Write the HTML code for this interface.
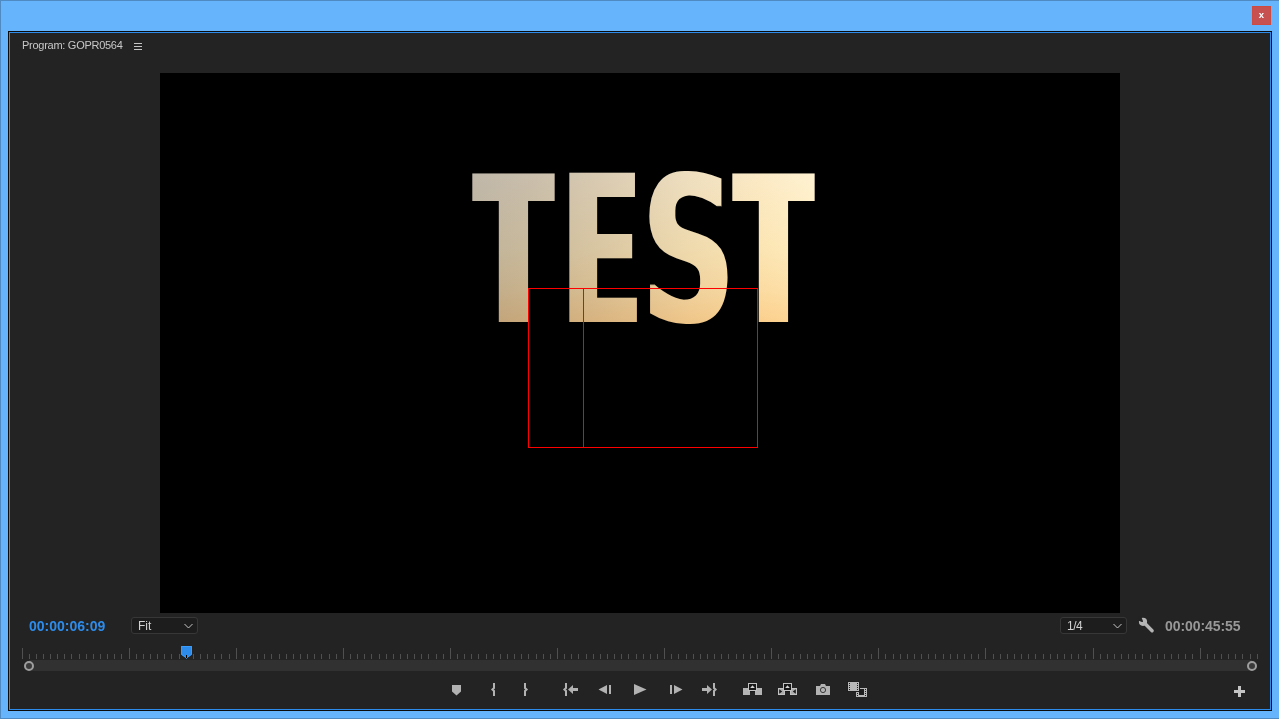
<!DOCTYPE html>
<html lang="en"><head><meta charset="utf-8"><title>Program: GOPR0564</title>
<style>
html,body{margin:0;padding:0}
body{width:1279px;height:719px;overflow:hidden;position:relative;background:#65b4fc;font-family:"Liberation Sans",sans-serif}
.abs{position:absolute}
#frameT{left:0;top:0;width:1279px;height:1px;background:#4f8bc2}
#frameL{left:0;top:0;width:1px;height:719px;background:#4f8bc2}
#frameB{left:0;top:718px;width:1279px;height:1px;background:#4f8bc2}
#close{left:1252px;top:6px;width:19px;height:19px;background:#c75050;box-sizing:border-box;border:1px solid #cf4b42;color:#fff;font-weight:bold;font-size:9.5px;line-height:15px;text-align:center}
#panel{left:8px;top:31px;width:1264px;height:680px;box-sizing:border-box;border:1px solid #0c0c0c;background:#2d8ceb}
#inner{left:10px;top:33px;width:1260px;height:676px;background:#232323}
#title{left:22px;top:38px;font-size:11px;line-height:15px;color:#c8c8c8;white-space:nowrap;letter-spacing:-0.27px}
#burger i{position:absolute;left:134px;width:8px;height:1px;background:#c4c4c4}
#video{left:160px;top:73px;width:960px;height:540px;background:#000;overflow:hidden}
#tc{left:29px;top:618px;font-size:14px;line-height:17px;font-weight:bold;color:#2d8ceb;white-space:nowrap}
#dur{left:1165px;top:618px;font-size:14px;line-height:17px;font-weight:bold;color:#989898;white-space:nowrap;letter-spacing:-0.08px}
.dd{box-sizing:border-box;border:1px solid #373737;border-radius:3px;background:#1d1d1d;color:#d2d2d2;font-size:12px;line-height:15px;height:17px}
.dd span{position:absolute;left:6.4px;top:1px}
#title,#tc,#dur,.dd span,#close{will-change:transform}
.tk{position:absolute;top:654px;width:1px;height:5px;background:#505050}
.tk.mj{top:648px;height:11px}
#scroll{left:29px;top:660px;width:1223px;height:11px;background:#313131}
.knob{width:10px;height:10px;box-sizing:border-box;border:2px solid #9e9e9e;border-radius:50%;background:#3a3a3a;top:661px}
#testwrap{left:0;top:0;width:960px;height:540px}
#test{position:absolute;left:0;top:70px;font-weight:bold;font-size:210px;line-height:210px;color:#fff;white-space:nowrap}
#test>span{display:inline-block;width:0;height:210px;vertical-align:top}
#test>span>span{display:inline-block;width:0;vertical-align:top;transform-origin:0 0}
.w1,.w4{filter:url(#dil)}
.w2{filter:url(#dilE)}
.w3{filter:url(#dilS)}
.w1{margin-left:317.36px} .g1{transform:scaleX(0.5685)}
.w2{margin-left:92.56px;position:relative;top:-4px;font-size:216.5px;line-height:216px} .g2{transform:scaleX(0.44)}
.w3{margin-left:71.79px;position:relative;top:4.5px;font-family:'DejaVu Sans',sans-serif;font-size:207.3px;line-height:207px} .g3{transform:scaleX(0.623)}
.w4{margin-left:95.15px} .g4{transform:scaleX(0.5685)}
#grad{left:0;top:0;width:960px;height:540px;mix-blend-mode:multiply;background:linear-gradient(180deg,#fff 100px,#fff9e6 177px,#ffefd0 217px,#ffe2b6 249px),linear-gradient(90deg,#bfb7aa 312px,#c9beac 370px,#d9cbb3 440px,#efdfc0 530px,#fbeac6 600px,#fff2d2 654px);background-blend-mode:multiply}
#video{isolation:isolate}
svg{position:absolute;left:0;top:0;overflow:visible}
</style></head><body>
<div class="abs" id="frameT"></div><div class="abs" id="frameL"></div><div class="abs" id="frameB"></div>
<div class="abs" id="close">x</div>
<div class="abs" id="panel"></div>
<div class="abs" id="inner"></div>
<div class="abs" id="title">Program: GOPR0564</div>
<div id="burger"><i style="top:43px"></i><i style="top:46px"></i><i style="top:49px"></i></div>

<div class="abs" id="video">
  <div class="abs" id="testwrap"><div id="test"><span class="w1"><span class="g1">T</span></span><span class="w2"><span class="g2">E</span></span><span class="w3"><span class="g3">S</span></span><span class="w4"><span class="g4">T</span></span></div></div>
  <div class="abs" id="grad"></div>
  <div class="abs" style="left:368px;top:215px;width:230px;height:160px;box-sizing:border-box;border:1px solid #f00"></div>
  <div class="abs" style="left:423px;top:215px;width:1px;height:160px;background:#f00"></div>
</div>

<div class="abs" id="tc">00:00:06:09</div>
<div class="abs dd" style="left:131px;top:617px;width:67px"><span>Fit</span></div>
<div class="abs dd" style="left:1060px;top:617px;width:67px"><span style="letter-spacing:-0.5px">1/4</span></div>
<div class="abs" id="dur">00:00:45:55</div>

<div id="ruler"><i class="tk mj" style="left:22px"></i><i class="tk" style="left:29px"></i><i class="tk" style="left:36px"></i><i class="tk" style="left:43px"></i><i class="tk" style="left:50px"></i><i class="tk" style="left:57px"></i><i class="tk" style="left:64px"></i><i class="tk" style="left:71px"></i><i class="tk" style="left:79px"></i><i class="tk" style="left:86px"></i><i class="tk" style="left:93px"></i><i class="tk" style="left:100px"></i><i class="tk" style="left:107px"></i><i class="tk" style="left:114px"></i><i class="tk" style="left:121px"></i><i class="tk mj" style="left:129px"></i><i class="tk" style="left:136px"></i><i class="tk" style="left:143px"></i><i class="tk" style="left:150px"></i><i class="tk" style="left:157px"></i><i class="tk" style="left:164px"></i><i class="tk" style="left:171px"></i><i class="tk" style="left:179px"></i><i class="tk" style="left:186px"></i><i class="tk" style="left:193px"></i><i class="tk" style="left:200px"></i><i class="tk" style="left:207px"></i><i class="tk" style="left:214px"></i><i class="tk" style="left:221px"></i><i class="tk" style="left:229px"></i><i class="tk mj" style="left:236px"></i><i class="tk" style="left:243px"></i><i class="tk" style="left:250px"></i><i class="tk" style="left:257px"></i><i class="tk" style="left:264px"></i><i class="tk" style="left:271px"></i><i class="tk" style="left:279px"></i><i class="tk" style="left:286px"></i><i class="tk" style="left:293px"></i><i class="tk" style="left:300px"></i><i class="tk" style="left:307px"></i><i class="tk" style="left:314px"></i><i class="tk" style="left:321px"></i><i class="tk" style="left:329px"></i><i class="tk" style="left:336px"></i><i class="tk mj" style="left:343px"></i><i class="tk" style="left:350px"></i><i class="tk" style="left:357px"></i><i class="tk" style="left:364px"></i><i class="tk" style="left:371px"></i><i class="tk" style="left:379px"></i><i class="tk" style="left:386px"></i><i class="tk" style="left:393px"></i><i class="tk" style="left:400px"></i><i class="tk" style="left:407px"></i><i class="tk" style="left:414px"></i><i class="tk" style="left:421px"></i><i class="tk" style="left:428px"></i><i class="tk" style="left:436px"></i><i class="tk" style="left:443px"></i><i class="tk mj" style="left:450px"></i><i class="tk" style="left:457px"></i><i class="tk" style="left:464px"></i><i class="tk" style="left:471px"></i><i class="tk" style="left:478px"></i><i class="tk" style="left:486px"></i><i class="tk" style="left:493px"></i><i class="tk" style="left:500px"></i><i class="tk" style="left:507px"></i><i class="tk" style="left:514px"></i><i class="tk" style="left:521px"></i><i class="tk" style="left:528px"></i><i class="tk" style="left:536px"></i><i class="tk" style="left:543px"></i><i class="tk" style="left:550px"></i><i class="tk mj" style="left:557px"></i><i class="tk" style="left:564px"></i><i class="tk" style="left:571px"></i><i class="tk" style="left:578px"></i><i class="tk" style="left:586px"></i><i class="tk" style="left:593px"></i><i class="tk" style="left:600px"></i><i class="tk" style="left:607px"></i><i class="tk" style="left:614px"></i><i class="tk" style="left:621px"></i><i class="tk" style="left:628px"></i><i class="tk" style="left:636px"></i><i class="tk" style="left:643px"></i><i class="tk" style="left:650px"></i><i class="tk" style="left:657px"></i><i class="tk mj" style="left:664px"></i><i class="tk" style="left:671px"></i><i class="tk" style="left:678px"></i><i class="tk" style="left:686px"></i><i class="tk" style="left:693px"></i><i class="tk" style="left:700px"></i><i class="tk" style="left:707px"></i><i class="tk" style="left:714px"></i><i class="tk" style="left:721px"></i><i class="tk" style="left:728px"></i><i class="tk" style="left:736px"></i><i class="tk" style="left:743px"></i><i class="tk" style="left:750px"></i><i class="tk" style="left:757px"></i><i class="tk" style="left:764px"></i><i class="tk mj" style="left:771px"></i><i class="tk" style="left:778px"></i><i class="tk" style="left:785px"></i><i class="tk" style="left:793px"></i><i class="tk" style="left:800px"></i><i class="tk" style="left:807px"></i><i class="tk" style="left:814px"></i><i class="tk" style="left:821px"></i><i class="tk" style="left:828px"></i><i class="tk" style="left:835px"></i><i class="tk" style="left:843px"></i><i class="tk" style="left:850px"></i><i class="tk" style="left:857px"></i><i class="tk" style="left:864px"></i><i class="tk" style="left:871px"></i><i class="tk mj" style="left:878px"></i><i class="tk" style="left:885px"></i><i class="tk" style="left:893px"></i><i class="tk" style="left:900px"></i><i class="tk" style="left:907px"></i><i class="tk" style="left:914px"></i><i class="tk" style="left:921px"></i><i class="tk" style="left:928px"></i><i class="tk" style="left:935px"></i><i class="tk" style="left:943px"></i><i class="tk" style="left:950px"></i><i class="tk" style="left:957px"></i><i class="tk" style="left:964px"></i><i class="tk" style="left:971px"></i><i class="tk" style="left:978px"></i><i class="tk mj" style="left:985px"></i><i class="tk" style="left:993px"></i><i class="tk" style="left:1000px"></i><i class="tk" style="left:1007px"></i><i class="tk" style="left:1014px"></i><i class="tk" style="left:1021px"></i><i class="tk" style="left:1028px"></i><i class="tk" style="left:1035px"></i><i class="tk" style="left:1043px"></i><i class="tk" style="left:1050px"></i><i class="tk" style="left:1057px"></i><i class="tk" style="left:1064px"></i><i class="tk" style="left:1071px"></i><i class="tk" style="left:1078px"></i><i class="tk" style="left:1085px"></i><i class="tk mj" style="left:1093px"></i><i class="tk" style="left:1100px"></i><i class="tk" style="left:1107px"></i><i class="tk" style="left:1114px"></i><i class="tk" style="left:1121px"></i><i class="tk" style="left:1128px"></i><i class="tk" style="left:1135px"></i><i class="tk" style="left:1142px"></i><i class="tk" style="left:1150px"></i><i class="tk" style="left:1157px"></i><i class="tk" style="left:1164px"></i><i class="tk" style="left:1171px"></i><i class="tk" style="left:1178px"></i><i class="tk" style="left:1185px"></i><i class="tk" style="left:1192px"></i><i class="tk mj" style="left:1200px"></i><i class="tk" style="left:1207px"></i><i class="tk" style="left:1214px"></i><i class="tk" style="left:1221px"></i><i class="tk" style="left:1228px"></i><i class="tk" style="left:1235px"></i><i class="tk" style="left:1242px"></i><i class="tk" style="left:1250px"></i><i class="tk" style="left:1257px"></i></div>
<div class="abs" id="scroll"></div>
<div class="abs knob" style="left:24px"></div>
<div class="abs knob" style="left:1247px"></div>

<svg width="1279" height="719" viewBox="0 0 1279 719">
<filter id="dil" filterUnits="userSpaceOnUse" x="-20" y="0" width="160" height="210"><feMorphology operator="dilate" radius="6 2"/><feGaussianBlur stdDeviation="0.45"/></filter>
<filter id="dilE" filterUnits="userSpaceOnUse" x="-20" y="0" width="160" height="215"><feMorphology operator="dilate" radius="7 0"/><feGaussianBlur stdDeviation="0.45"/></filter>
<filter id="dilS" filterUnits="userSpaceOnUse" x="-20" y="0" width="160" height="210"><feMorphology operator="dilate" radius="2 0"/><feMorphology operator="erode" radius="0 2"/><feGaussianBlur stdDeviation="0.45"/></filter>
<g fill="#b2b2b2" stroke="none">
<!-- marker -->
<path d="M452 685H461V691.5L456.5 695.5L452 691.5Z"/>
<!-- go to in arrow -->
<path d="M568 689.5L573 685V688H578V691H573V694Z"/>
<!-- step back -->
<path d="M598.5 689.5L607 685V694Z"/><rect x="609" y="685" width="2" height="9"/>
<!-- play -->
<path d="M634 684L646.5 689.5L634 695Z"/>
<!-- step forward -->
<rect x="670" y="685" width="2" height="9"/><path d="M674 685L682.5 689.5L674 694Z"/>
<!-- go to out arrow -->
<path d="M712 689.5L707 685V688H702V691H707V694Z"/>
<!-- plus -->
<path d="M1238 686H1241V690H1245V693H1241V697H1238V693H1234V690H1238Z" fill="#c4c4c4"/>
</g>
<g fill="none" stroke="#b2b2b2" stroke-width="2" stroke-linejoin="miter">
<path d="M494 683V688L492.4 689.5L494 691V696"/>
<path d="M525 683V688L526.6 689.5L525 691V696"/>
<path d="M566 683V688L564.4 689.5L566 691V696"/>
<path d="M714 683V688L715.6 689.5L714 691V696"/>
</g>
<!-- lift -->
<g>
<rect x="743" y="688" width="7" height="7" fill="#b4b4b4"/><rect x="755" y="688" width="7" height="7" fill="#b4b4b4"/>
<rect x="750" y="691" width="5" height="1" fill="#191919"/>
<rect x="748" y="683" width="9" height="8" fill="#c2c2c2"/>
<rect x="749" y="684" width="7" height="6" fill="#171717"/>
<path d="M750.2 688.1L752.5 685.2L754.8 688.1Z" fill="#d6d6d6"/>
</g>
<!-- extract -->
<g>
<rect x="778.5" y="688.5" width="6" height="6" fill="#adadad" stroke="#c2c2c2"/><rect x="790.5" y="688.5" width="6" height="6" fill="#adadad" stroke="#c2c2c2"/>
<path d="M779.2 689.2L782.2 691.5L779.2 693.8Z" fill="#1a1a1a"/><path d="M795.8 689.2L792.8 691.5L795.8 693.8Z" fill="#1a1a1a"/>
<rect x="785" y="691" width="5" height="1" fill="#191919"/>
<rect x="783" y="683" width="9" height="8" fill="#c2c2c2"/>
<rect x="784" y="684" width="7" height="6" fill="#171717"/>
<path d="M785.2 688.1L787.5 685.2L789.8 688.1Z" fill="#d6d6d6"/>
</g>
<!-- camera -->
<g>
<path d="M816 686H820L821 684H825L826 686H830V695H816Z" fill="#b2b2b2"/>
<circle cx="823" cy="690" r="2.6" fill="#b2b2b2" stroke="#2a2a2a" stroke-width="0.9"/>
</g>
<!-- comparison view -->
<g>
<rect x="856" y="688" width="11" height="9" fill="#b8b8b8"/>
<rect x="859" y="689" width="5" height="6" fill="#1e1e1e"/>
<rect x="847" y="681" width="13" height="11" fill="#1e1e1e"/>
<rect x="848" y="682" width="11" height="9" fill="#b8b8b8"/>
<g fill="#1e1e1e">
<rect x="849" y="683" width="1" height="1"/><rect x="849" y="685" width="1" height="1"/><rect x="849" y="687" width="1" height="1"/><rect x="849" y="689" width="1" height="1"/>
<rect x="857" y="683" width="1" height="1"/><rect x="857" y="685" width="1" height="1"/><rect x="857" y="687" width="1" height="1"/><rect x="857" y="689" width="1" height="1"/>
<rect x="857" y="693" width="1" height="1"/><rect x="857" y="695" width="1" height="1"/>
<rect x="865" y="689" width="1" height="1"/><rect x="865" y="691" width="1" height="1"/><rect x="865" y="693" width="1" height="1"/><rect x="865" y="695" width="1" height="1"/>
</g>
</g>
<!-- chevrons -->
<g fill="none" stroke="#c8c8c8" stroke-width="1">
<path d="M184.5 624L188.5 628L192.5 624"/>
<path d="M1113.5 624L1117.5 628L1121.5 624"/>
</g>
<!-- wrench -->
<g>
<path d="M1145.2 623.8L1152.1 630.7" stroke="#b4b4b4" stroke-width="3.4" stroke-linecap="round" fill="none"/>
<circle cx="1143" cy="621.8" r="4.1" fill="#b4b4b4"/>
<path d="M1142.2 621.2L1137.2 619.2L1140.2 616.2Z" fill="#232323" stroke="#232323" stroke-width="1.6" stroke-linejoin="round"/>
</g>
<!-- playhead -->
<g>
<path d="M181 646H192V654.5L186.5 658.5L181 654.5Z" fill="#2d8ceb"/>
<path d="M181.5 646.5H191.5V654.3L186.5 658L181.5 654.3Z" fill="none" stroke="#3a9cfc" stroke-width="1"/>
<rect x="186" y="655" width="1" height="3" fill="#000"/>
</g>

</svg>
</body></html>
